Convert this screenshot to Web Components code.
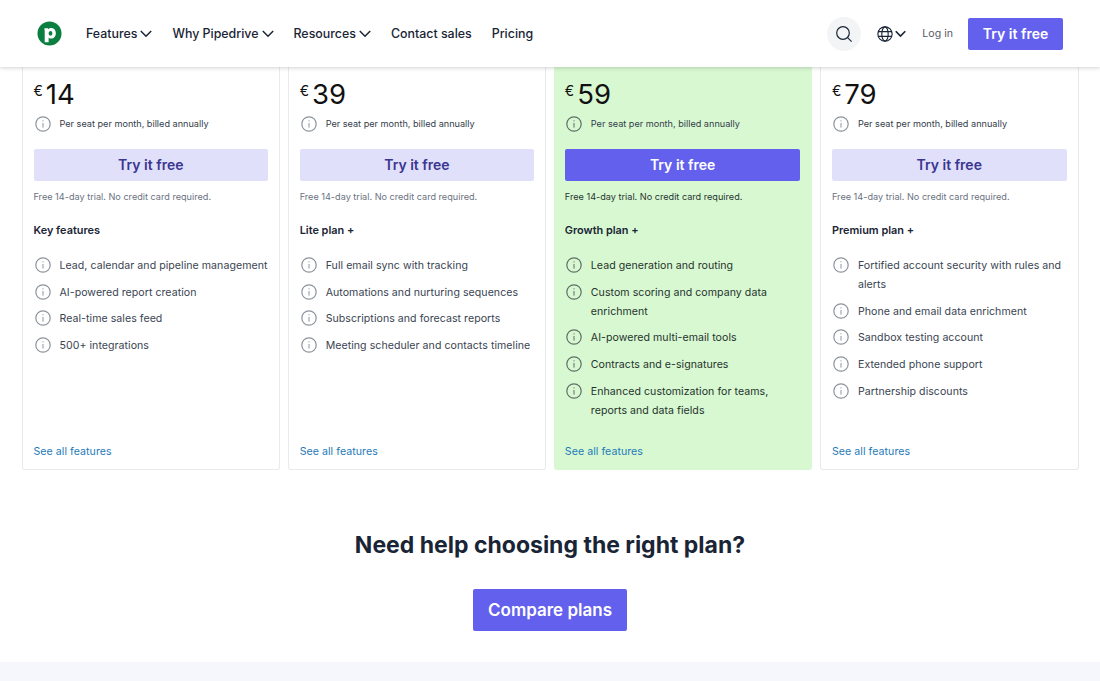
<!DOCTYPE html>
<html lang="en"><head><meta charset="utf-8"><title>Pipedrive pricing</title>
<style>
html,body{margin:0;height:681px;overflow:hidden;background:#fff;font-family:Inter,"Liberation Sans",sans-serif;color:#192435}
</style></head><body>
<site-header></site-header>
<plan-grid>
<plan-card price="14" heading="Key features" items="Lead, calendar and pipeline management|AI-powered report creation|Real-time sales feed|500+ integrations"></plan-card>
<plan-card price="39" heading="Lite plan +" items="Full email sync with tracking|Automations and nurturing sequences|Subscriptions and forecast reports|Meeting scheduler and contacts timeline"></plan-card>
<plan-card featured price="59" heading="Growth plan +" items="Lead generation and routing|Custom scoring and company data enrichment|AI-powered multi-email tools|Contracts and e-signatures|Enhanced customization for teams, reports and data fields"></plan-card>
<plan-card price="79" heading="Premium plan +" items="Fortified account security with rules and alerts|Phone and email data enrichment|Sandbox testing account|Extended phone support|Partnership discounts"></plan-card>
</plan-grid>
<compare-cta></compare-cta>
<script>
const chev='<svg width="12" height="8" viewBox="0 0 12 8" fill="none" stroke="currentColor" stroke-width="1.5"><path d="M.8 1L6 6.2 11.2 1"/></svg>';
const info='<svg width="16" height="16" viewBox="0 0 16 16" fill="none" stroke="currentColor"><circle cx="8" cy="8" r="7.2" stroke-width="1.2"/><path d="M8 7v4.6" stroke-width="1"/><circle cx="8" cy="4.8" r=".65" fill="currentColor" stroke="none"/></svg>';
class SiteHeader extends HTMLElement{constructor(){super();this.attachShadow({mode:'open'}).innerHTML=`<style>
:host{display:flex;align-items:center;height:67px;padding:0 37px 0 36.5px;box-sizing:border-box;background:#fff;box-shadow:0 1px 4px rgba(0,0,0,.18);position:relative;z-index:2;font-size:12.4px;font-weight:500;color:#192435}
.logo{width:25px;height:25px;margin-right:24.5px;flex:none}
nav{display:flex;gap:20px;flex:1}
nav span{display:flex;align-items:center;gap:3px}
.search{width:34px;height:34px;border-radius:50%;background:#f2f4f6;display:flex;align-items:center;justify-content:center}
.globe{display:flex;align-items:center;gap:2px;margin-left:16px;color:#192435}
.login{font-size:10.6px;font-weight:400;color:#555b66;margin:0 15px 0 16px}
.btn{width:95px;height:32px;padding-bottom:1px;box-sizing:border-box;background:#6460ee;color:#fff;border-radius:2px;font-size:14px;font-weight:600;display:flex;align-items:center;justify-content:center}
</style>
<svg class="logo" viewBox="0 0 26 26"><circle cx="13" cy="13" r="12.5" fill="#0a7f3f"/><path fill="#fff" fill-rule="evenodd" d="M7.6 7.6h3.8l.2 1.1c.8-.9 1.9-1.4 3.1-1.4 3 0 4.9 2.3 4.9 5.5s-2 5.5-4.9 5.5c-1 0-1.9-.3-2.6-.9v4.6H8V10.2L7.6 7.6zm4.5 5.2c0 1.4.8 2.4 2 2.4s1.9-1 1.9-2.4-.7-2.4-1.9-2.4-2 1-2 2.4z"/></svg>
<nav><span>Features ${chev}</span><span>Why Pipedrive ${chev}</span><span>Resources ${chev}</span><span>Contact sales</span><span>Pricing</span></nav>
<div class="search"><svg width="18" height="18" viewBox="0 0 18 18" fill="none" stroke="#192435" stroke-width="1.2"><circle cx="8" cy="8" r="6.3"/><path d="M12.6 12.6L16.6 16.6"/></svg></div>
<div class="globe"><svg width="16" height="16" viewBox="0 0 17 17" fill="none" stroke="#192435" stroke-width="1.2"><circle cx="8.5" cy="8.5" r="7.6"/><ellipse cx="8.5" cy="8.5" rx="3.4" ry="7.6"/><path d="M1.2 6h14.6M1.2 11h14.6"/></svg>${chev.replace('stroke-width="1.5"','stroke-width="1.8"').replace('width="12"','width="11"')}</div>
<span class="login">Log in</span><div class="btn">Try it free</div>`}}
customElements.define('site-header',SiteHeader);
class PlanGrid extends HTMLElement{constructor(){super();this.attachShadow({mode:'open'}).innerHTML=`<style>:host{display:grid;grid-template-columns:repeat(4,1fr);gap:7.67px;padding:0 21.5px;height:403px}</style><slot></slot>`}}
customElements.define('plan-grid',PlanGrid);
class PlanCard extends HTMLElement{connectedCallback(){
const items=this.getAttribute('items').split('|').map(t=>`<li>${info}<span>${t}</span></li>`).join('');
this.attachShadow({mode:'open'}).innerHTML=`<style>
:host{display:flex;flex-direction:column;box-sizing:border-box;padding:0 11px 9px 11px;border:1px solid #e8eaed;border-top:0;border-radius:0 0 3px 3px;font-size:11px;color:#3a4452;--ic:#8d939c;--muted:#6b7280;--link:#1f7bb8}
:host([featured]){background:#d8f8d2;border-color:#d8f8d2;padding-left:10px;--ic:#5f6f66;--muted:#27352f;color:#26332d}
.price{display:flex;height:35px;align-items:flex-start;padding-top:9px;color:#111;font-size:27.5px;line-height:36px;font-weight:400}
.price small{font-size:14px;line-height:30px;margin-right:3px}
.per{display:flex;align-items:center;gap:9px;font-size:9.15px;height:20px;color:#333c49;margin-top:3px}
.per span{margin-bottom:2px}
.per svg{margin-left:1px}
.per svg,li svg{flex:none;color:var(--ic)}
.cta{height:32px;padding-bottom:2px;box-sizing:border-box;margin-top:15px;background:#e1e0fb;color:#3a3691;border-radius:2px;font-size:14px;font-weight:600;display:flex;align-items:center;justify-content:center}
:host([featured]) .cta{background:#6460ee;color:#fff}
.free{font-size:9.15px;color:var(--muted);margin-top:9px;line-height:13px}
h3{font-size:10.9px;font-weight:600;color:#192435;margin:19px 0 0;line-height:16px}
ul{list-style:none;margin:18px 0 0;padding:0;display:flex;flex-direction:column;gap:7.7px;flex:1}
li{display:flex;gap:9px;font-size:10.6px;line-height:19px;letter-spacing:.04px}
li svg{margin-top:1px;margin-left:1px}
a{font-size:10.6px;color:var(--link);line-height:16px;text-decoration:none;letter-spacing:.05px}
</style><div class="price"><small>€</small>${this.getAttribute('price')}</div>
<div class="per">${info}<span>Per seat per month, billed annually</span></div>
<div class="cta">Try it free</div><div class="free">Free 14-day trial. No credit card required.</div>
<h3>${this.getAttribute('heading')}</h3><ul>${items}</ul><a href="#">See all features</a>`}}
customElements.define('plan-card',PlanCard);
class CompareCta extends HTMLElement{constructor(){super();this.attachShadow({mode:'open'}).innerHTML=`<style>
:host{display:flex;flex-direction:column;align-items:center;height:211px;box-sizing:border-box;padding-top:59px;background:linear-gradient(#fff 192px,#f5f7fc 192px)}
h2{margin:0;font-size:23px;line-height:32px;font-weight:700;color:#192435}
.b{margin-top:28px;width:154px;height:42px;padding-bottom:1px;box-sizing:border-box;background:#6460ee;color:#fff;border-radius:2px;font-size:17px;font-weight:600;display:flex;align-items:center;justify-content:center}
</style><h2>Need help choosing the right plan?</h2><div class="b">Compare plans</div>`}}
customElements.define('compare-cta',CompareCta);
</script></body></html>
